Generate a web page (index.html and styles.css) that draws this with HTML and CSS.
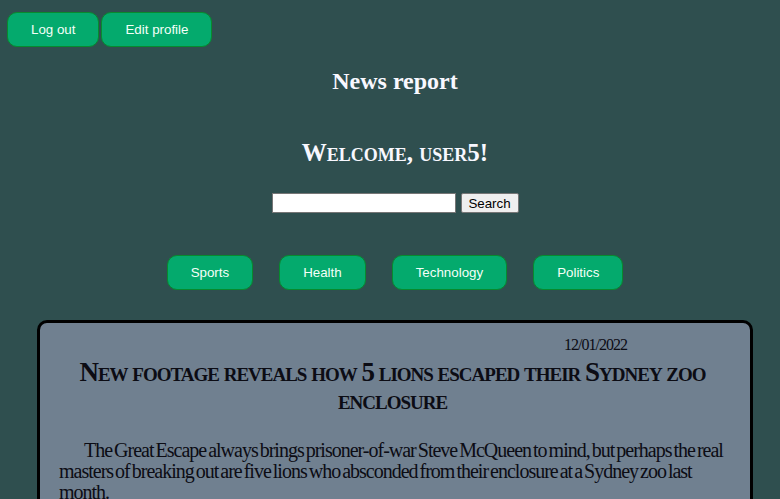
FILE: index.html
```html
<!DOCTYPE html>
<html>
<head>
<meta charset="utf-8">
<link rel="stylesheet" href="styles.css">
</head>
<body>
<nav class="topbar">
  <button class="btn">Log out</button>
  <button class="btn">Edit profile</button>
</nav>
<h2 class="site-title">News report</h2>
<h2 class="welcome">Welcome, user5!</h2>
<form class="search">
  <input type="text" class="search-input">
  <button type="button" class="search-btn">Search</button>
</form>
<div class="categories">
  <button class="btn">Sports</button>
  <button class="btn">Health</button>
  <button class="btn">Technology</button>
  <button class="btn">Politics</button>
</div>
<article class="card">
  <div class="date">12/01/2022</div>
  <h2 class="card-title">New footage reveals how 5 lions escaped their Sydney zoo enclosure</h2>
  <p class="card-text">The Great Escape always brings prisoner-of-war Steve McQueen to mind, but perhaps the real masters of breaking out are five lions who absconded from their enclosure at a Sydney zoo last month.</p>
</article>
</body>
</html>
```
FILE: styles.css
```css
html, body {
  margin: 0;
  padding: 0;
}
body {
  background: #2f4f4f;
  font-family: "Liberation Serif", serif;
  color: #f8f8ff;
  overflow: hidden;
  padding-left: 10px;
}
.topbar {
  display: flex;
  gap: 2px;
  padding-top: 12px;
  margin-left: -3px;
}
.btn {
  background: #04aa6d;
  border: 1px solid #078a2e;
  border-radius: 10px;
  color: #f4fff8;
  font-family: "Liberation Sans", sans-serif;
  font-size: 13.33px;
  height: 35px;
  padding: 0 23px;
  box-sizing: border-box;
}
.site-title {
  text-align: center;
  font-size: 24px;
  margin: 20px 0 0;
  line-height: 28px;
}
.welcome {
  text-align: center;
  font-size: 25px;
  font-variant: small-caps;
  margin: 44px 0 0;
  line-height: 28px;
}
.search {
  display: flex;
  justify-content: center;
  gap: 5px;
  margin-top: 26px;
}
.search-input {
  width: 184px;
  height: 20px;
  box-sizing: border-box;
  border: 1px solid #767676;
  padding: 1px 2px;
  margin: 0;
}
.search-btn {
  font-family: "Liberation Sans", sans-serif;
  font-size: 13.33px;
  height: 20px;
  width: 58px;
  padding: 0;
  margin: 0;
  background: #efefef;
  border: 1px solid #767676;
  border-radius: 2px;
  color: #000;
}
.categories {
  display: flex;
  justify-content: center;
  gap: 26px;
  margin-top: 42px;
}
.categories .btn {
  padding: 0 23px;
}
.card {
  margin: 30px 27px 0 27px;
  background: #708090;
  border: 3px solid #000;
  border-radius: 10px;
  padding: 13px 24px 20px 19px;
  color: #0c0c14;
  letter-spacing: -1px;
}
.date {
  font-size: 16px;
  line-height: 18px;
  text-align: right;
  padding-right: 99px;
}
.card-title {
  font-size: 27px;
  font-variant: small-caps;
  text-align: center;
  line-height: 28px;
  word-spacing: -1px;
  margin: 4px 0 0;
}
.card-text {
  font-size: 20px;
  line-height: 21px;
  text-indent: 25px;
  word-spacing: -2px;
  margin: 26px 0 0;
}
```
